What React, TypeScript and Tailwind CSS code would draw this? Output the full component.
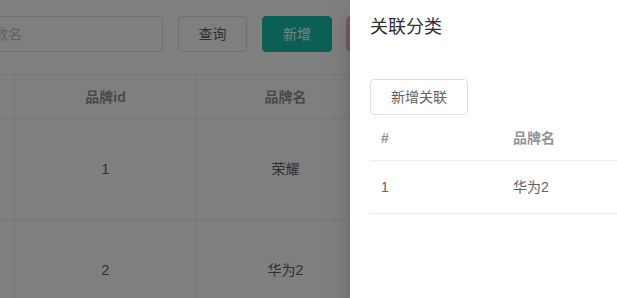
const brands = [
  { id: 1, name: "荣耀" },
  { id: 2, name: "华为2" },
];

const related = [{ idx: 1, name: "华为2" }];

const font = "font-['Liberation_Sans','Noto_Sans_CJK_SC',sans-serif]";

export default function App() {
  return (
    <div className={`relative h-[298px] w-[617px] overflow-hidden bg-white text-sm text-[#606266] ${font}`}>
      {/* page behind the drawer */}
      <div className="ml-[-36px] w-[700px] pt-4">
        <div className="flex items-center">
          <div className="flex h-9 w-[199px] items-center rounded border border-[#dcdfe6] px-[15px] text-[#c0c4cc]">
            参数名
          </div>
          <button className="ml-[15px] h-9 w-[69px] rounded border border-[#dcdfe6] bg-white text-[#606266]">
            查询
          </button>
          <button className="ml-[15px] h-9 w-[70px] rounded border border-[#18bfa9] bg-[#18bfa9] text-white">
            新增
          </button>
          <button className="ml-[14px] h-9 w-[96px] rounded border border-[#fab6b6] bg-[#fab6b6] text-white">
            批量删除
          </button>
        </div>

        <table className="mt-[22px] border-collapse border border-[#ebeef5]">
          <thead>
            <tr className="h-[44px]">
              <th className="w-[50px] border border-[#ebeef5]"></th>
              <th className="w-[182px] border border-[#ebeef5] font-bold text-[#909399]">品牌id</th>
              <th className="w-[178px] border border-[#ebeef5] font-bold text-[#909399]">品牌名</th>
              <th className="w-[182px] border border-[#ebeef5] font-bold text-[#909399]">logo</th>
            </tr>
          </thead>
          <tbody>
            {brands.map((b) => (
              <tr key={b.id} className="h-[101px]">
                <td className="border border-[#ebeef5]"></td>
                <td className="border border-[#ebeef5] text-center">{b.id}</td>
                <td className="border border-[#ebeef5] text-center">{b.name}</td>
                <td className="border border-[#ebeef5] text-center"></td>
              </tr>
            ))}
          </tbody>
        </table>
      </div>

      {/* mask */}
      <div className="absolute inset-0 bg-black/50"></div>

      {/* drawer */}
      <div className="absolute top-0 right-0 bottom-0 w-[267px] overflow-hidden bg-white pl-5 shadow-[0_8px_10px_-5px_rgba(0,0,0,0.2),0_16px_24px_2px_rgba(0,0,0,0.14)]">
        <div className="pt-[15px] text-[18px] leading-6 text-[#303133]">关联分类</div>

        <button className="mt-10 h-9 w-[98px] rounded border border-[#dcdfe6] bg-white text-[#606266]">
          新增关联
        </button>

        <div className="w-[400px]">
          <div className="flex h-[46px] items-center border-b border-[#ebeef5] font-bold text-[#909399]">
            <div className="w-[132px] pl-[11px]">#</div>
            <div className="w-[132px] pl-[11px]">品牌名</div>
          </div>
          {related.map((r) => (
            <div key={r.idx} className="flex h-[53px] items-center border-b border-[#ebeef5]">
              <div className="w-[132px] pl-[11px]">{r.idx}</div>
              <div className="w-[132px] pl-[11px]">{r.name}</div>
            </div>
          ))}
        </div>
      </div>
    </div>
  );
}
